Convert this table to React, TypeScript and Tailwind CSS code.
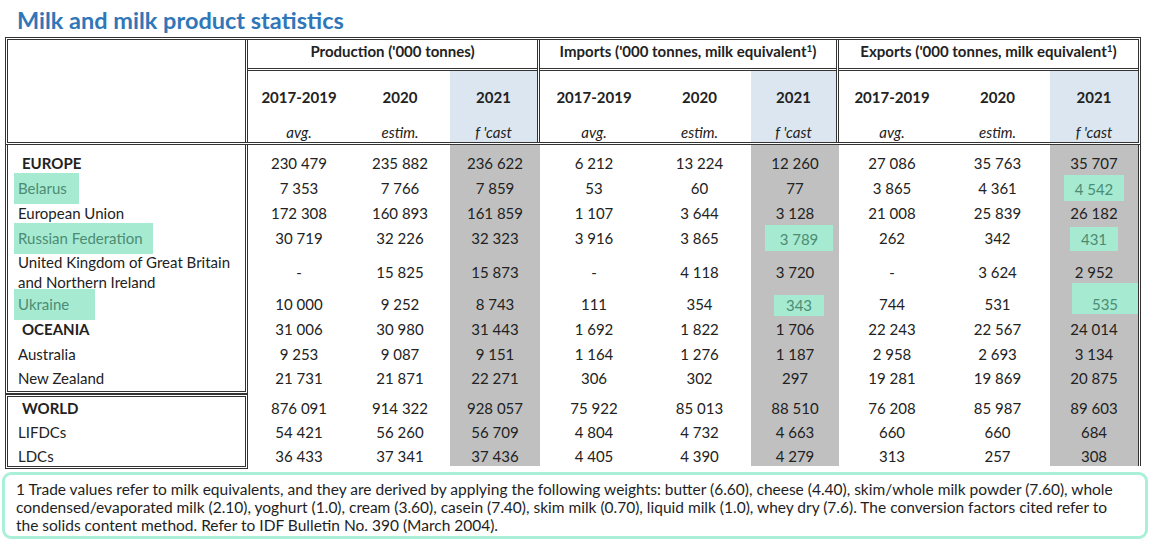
import type { ReactNode } from "react";

// column widths (body); header widths include the double rule on group edges
const COLS = [
  "w-[102px]",
  "w-[100px]",
  "w-[90px]",
  "w-[108px]",
  "w-[103px]",
  "w-[88px]",
  "w-[106px]",
  "w-[105px]",
  "w-[88px]",
];
const GRAY = [2, 5, 8];

type Cell = string | { v: string; cls: string };

interface Row {
  name: ReactNode;
  bold?: boolean;
  h: string;
  vals: Cell[];
}

const nameHl = "inline-block -ml-[4px] pl-[4px] py-[4px] bg-[#a6ead2] text-[#4c8c73]";
const numHl = "inline-block leading-5 bg-[#a6ead2] text-[#4c8c73]";

const group1: Row[] = [
  { name: "EUROPE", bold: true, h: "h-[25px]", vals: ["230 479", "235 882", "236 622", "6 212", "13 224", "12 260", "27 086", "35 763", "35 707"] },
  {
    name: <span className={`${nameHl} pr-[12px]`}>Belarus</span>,
    h: "h-[25px]",
    vals: ["7 353", "7 766", "7 859", "53", "60", "77", "3 865", "4 361", { v: "4 542", cls: "w-[60px] py-[4px]" }],
  },
  { name: "European Union", h: "h-[25px]", vals: ["172 308", "160 893", "161 859", "1 107", "3 644", "3 128", "21 008", "25 839", "26 182"] },
  {
    name: <span className={`${nameHl} pr-[10px]`}>Russian Federation</span>,
    h: "h-[25px]",
    vals: [
      "30 719",
      "32 226",
      "32 323",
      "3 916",
      "3 865",
      { v: "3 789", cls: "w-[68px] py-[4px] ml-[8px]" },
      "262",
      "342",
      { v: "431", cls: "w-[48px] pt-[2px] pb-[8px] mt-[7px]" },
    ],
  },
  {
    name: (
      <span className="leading-5">
        United Kingdom of Great Britain
        <br />
        and Northern Ireland
      </span>
    ),
    h: "h-[42px]",
    vals: ["-", "15 825", "15 873", "-", "4 118", "3 720", "-", "3 624", "2 952"],
  },
  {
    name: <span className={`${nameHl} pr-[26px]`}>Ukraine</span>,
    h: "h-[23px]",
    vals: [
      "10 000",
      "9 252",
      "8 743",
      "111",
      "354",
      { v: "343", cls: "w-[50px] pb-[7px] mt-[8px] ml-[8px]" },
      "744",
      "531",
      { v: "535", cls: "w-[76px] pt-[11px] mb-[12px] ml-[22px]" },
    ],
  },
  { name: "OCEANIA", bold: true, h: "h-[26px]", vals: ["31 006", "30 980", "31 443", "1 692", "1 822", "1 706", "22 243", "22 567", "24 014"] },
  { name: "Australia", h: "h-[24px]", vals: ["9 253", "9 087", "9 151", "1 164", "1 276", "1 187", "2 958", "2 693", "3 134"] },
  { name: "New Zealand", h: "h-[25px]", vals: ["21 731", "21 871", "22 271", "306", "302", "297", "19 281", "19 869", "20 875"] },
];

const group2: Row[] = [
  { name: "WORLD", bold: true, h: "h-[22px]", vals: ["876 091", "914 322", "928 057", "75 922", "85 013", "88 510", "76 208", "85 987", "89 603"] },
  { name: "LIFDCs", h: "h-[27px]", vals: ["54 421", "56 260", "56 709", "4 804", "4 732", "4 663", "660", "660", "684"] },
  { name: "LDCs", h: "h-[20px]", vals: ["36 433", "37 341", "37 436", "4 405", "4 390", "4 279", "313", "257", "308"] },
];

const rule = "border-double border-[#333]";

function NameCell({ row }: { row: Row }) {
  return (
    <div className={`${row.h} flex items-center whitespace-nowrap ${row.bold ? "pl-[14px] font-bold" : "pl-[10px]"}`}>
      {row.name}
    </div>
  );
}

function NumRow({ row }: { row: Row }) {
  return (
    <div className={`${row.h} flex`}>
      {row.vals.map((c, i) => (
        <div
          key={i}
          className={`${COLS[i]} flex items-center justify-center ${GRAY.includes(i) ? "bg-[#c0c0c0]" : ""}`}
        >
          {typeof c === "string" ? c : <span className={`${numHl} ${c.cls} text-center`}>{c.v}</span>}
        </div>
      ))}
    </div>
  );
}

function GapRow({ h }: { h: string }) {
  return (
    <div className={`${h} flex`}>
      {COLS.map((w, i) => (
        <div key={i} className={`${w} ${GRAY.includes(i) ? "bg-[#c0c0c0]" : ""}`} />
      ))}
    </div>
  );
}

function Group({
  title,
  widths,
  last,
}: {
  title: ReactNode;
  widths: string[];
  last?: boolean;
}) {
  const subs = [
    ["2017-2019", "avg."],
    ["2020", "estim."],
    ["2021", "f 'cast"],
  ];
  return (
    <div className={`flex flex-col ${last ? "" : `border-r-[3px] ${rule}`}`}>
      <div className={`h-[31px] pb-[5px] flex items-center justify-center font-bold whitespace-nowrap border-b-[3px] ${rule}`}>
        {title}
      </div>
      <div className="flex h-[71px]">
        {subs.map(([y, s], i) => (
          <div
            key={y}
            className={`${widths[i]} flex flex-col items-center ${i === 2 ? "bg-[#dce6f1]" : ""}`}
          >
            <div className="pt-[16px] leading-5 font-bold">{y}</div>
            <div className="mt-[15px] leading-5 italic">{s}</div>
          </div>
        ))}
      </div>
    </div>
  );
}

export default function App() {
  return (
    <div className="w-[1150px] h-[547px] bg-white text-[#222] text-[15px] font-['Lato','Noto_Sans',sans-serif] overflow-hidden">
      <div className="h-[37px] pl-[17px] pt-[7px] text-[23.5px] leading-[26px] font-bold text-[#2f77b8]">
        Milk and milk product statistics
      </div>

      <div className="ml-[5px] w-[1136px]">
        {/* header */}
        <div className={`flex border-[3px] ${rule}`}>
          <div className={`w-[240px] border-r-[3px] ${rule}`} />
          <Group title="Production ('000 tonnes)" widths={["w-[102px]", "w-[100px]", "w-[87px]"]} />
          <Group
            title={
              <span>
                Imports ('000 tonnes, milk equivalent<sup className="text-[10px] font-bold">1</sup>)
              </span>
            }
            widths={["w-[108px]", "w-[103px]", "w-[85px]"]}
          />
          <Group
            title={
              <span>
                Exports ('000 tonnes, milk equivalent<sup className="text-[10px] font-bold">1</sup>)
              </span>
            }
            widths={["w-[106px]", "w-[105px]", "w-[88px]"]}
            last
          />
        </div>

        {/* body */}
        <div className="flex">
          <div className="w-[243px] flex flex-col">
            <div className={`border-x-[3px] border-b-[3px] ${rule} pt-[6px]`}>
              {group1.map((r, i) => (
                <NameCell key={i} row={r} />
              ))}
            </div>
            <div className={`border-[3px] ${rule}`}>
              {group2.map((r, i) => (
                <NameCell key={i} row={r} />
              ))}
            </div>
          </div>
          <div className={`w-[893px] border-r-[3px] ${rule} self-start`}>
            <GapRow h="h-[6px]" />
            {group1.map((r, i) => (
              <NumRow key={i} row={r} />
            ))}
            <GapRow h="h-[6px]" />
            {group2.map((r, i) => (
              <NumRow key={i} row={r} />
            ))}
          </div>
        </div>
      </div>

      {/* footnote */}
      <div className="mx-[2px] mt-[3px] border-[3px] border-[#aaf0d9] rounded-[9px] pl-[11px] pt-[5px] pb-[2px] text-[15.5px] leading-[18px] text-[#1e1e1e]">
        <div className="whitespace-nowrap">
          1 Trade values refer to milk equivalents, and they are derived by applying the following weights: butter (6.60), cheese (4.40), skim/whole milk powder (7.60), whole
        </div>
        <div className="whitespace-nowrap">
          condensed/evaporated milk (2.10), yoghurt (1.0), cream (3.60), casein (7.40), skim milk (0.70), liquid milk (1.0), whey dry (7.6). The conversion factors cited refer to
        </div>
        <div className="whitespace-nowrap">the solids content method. Refer to IDF Bulletin No. 390 (March 2004).</div>
      </div>
    </div>
  );
}
